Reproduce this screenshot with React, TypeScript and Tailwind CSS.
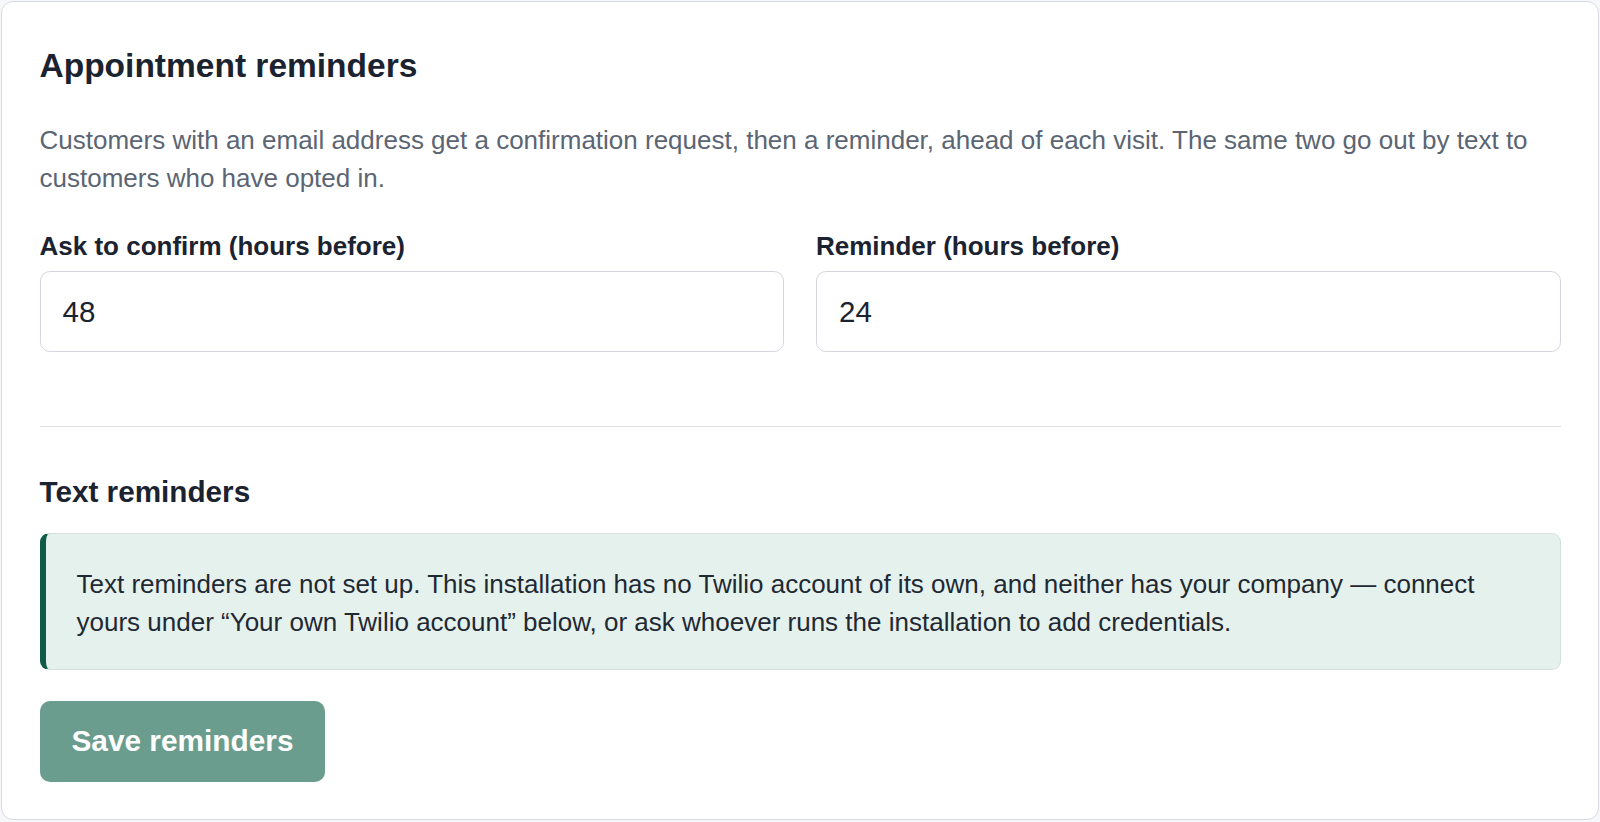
import { useState } from "react";

export default function App() {
  const [confirmHours, setConfirmHours] = useState("48");
  const [reminderHours, setReminderHours] = useState("24");

  return (
    <div
      className="min-h-screen bg-[#f6f7f9] p-px text-[#1b2230]"
      style={{ fontFamily: '"Liberation Sans", Arial, sans-serif' }}
    >
      <section className="rounded-[12px] border-[1.5px] border-[#d8dbe3] bg-white px-[37.5px] pt-[44px] pb-[37px]">
        <h2 className="text-[33.5px] font-bold leading-[40px] text-[#1b2230]">
          Appointment reminders
        </h2>
        <p className="mt-[35px] text-[26px] leading-[38px] text-[#5b6573]">
          Customers with an email address get a confirmation request, then a reminder, ahead of each
          visit. The same two go out by text to customers who have opted in.
        </p>

        <div className="mt-[33px] grid grid-cols-2 gap-[32px]">
          <label className="flex flex-col gap-[9px]">
            <span className="text-[26px] font-bold leading-[32px]">Ask to confirm (hours before)</span>
            <input
              value={confirmHours}
              onChange={(e) => setConfirmHours(e.target.value)}
              className="h-[81px] rounded-[10px] border-[1.5px] border-[#d3d7dd] bg-white px-[22px] text-[29.5px] text-[#1b2230] outline-none"
            />
          </label>
          <label className="flex flex-col gap-[9px]">
            <span className="text-[26px] font-bold leading-[32px]">Reminder (hours before)</span>
            <input
              value={reminderHours}
              onChange={(e) => setReminderHours(e.target.value)}
              className="h-[81px] rounded-[10px] border-[1.5px] border-[#d3d7dd] bg-white px-[22px] text-[29.5px] text-[#1b2230] outline-none"
            />
          </label>
        </div>

        <hr className="mt-[74px] border-t-[1.5px] border-[#dde1e6]" />

        <h3 className="mt-[47px] text-[29.7px] font-bold leading-[36px]">Text reminders</h3>

        {/* Twilio notice */}
        <div className="mt-[23px] rounded-[9px] border-[1.5px] border-l-[6px] border-[#d3e0db] border-l-[#0e5c45] bg-[#e5f1ed] px-[31px] pt-[30.5px] pb-[27.5px] text-[26px] leading-[38.3px] text-[#1f2933]">
          Text reminders are not set up. This installation has no Twilio account of its own, and
          neither has your company — connect yours under “Your own Twilio account” below, or ask
          whoever runs the installation to add credentials.
        </div>

        <button
          type="button"
          className="mt-[31px] h-[81px] rounded-[10px] bg-[#6b9d8e] px-[32px] text-[29.8px] font-bold text-white"
        >
          Save reminders
        </button>
      </section>
    </div>
  );
}
